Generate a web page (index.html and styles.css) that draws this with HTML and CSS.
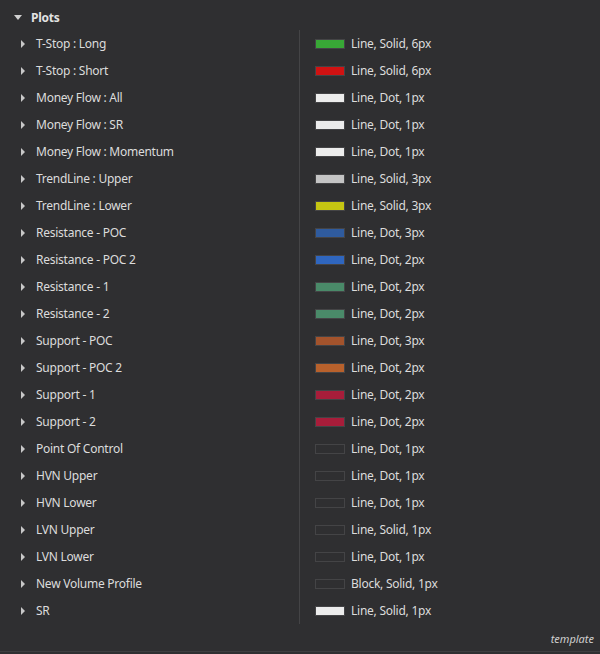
FILE: index.html
```html
<!DOCTYPE html>
<html>
<head>
<meta charset="utf-8">
<link rel="stylesheet" href="styles.css">
</head>
<body>
<div class="panel">
  <div class="header"><span class="tri-down"></span><span class="title">Plots</span></div>
  <div class="list">
    <div class="names">
      <div class="row"><span class="tri-right"></span>T-Stop : Long</div>
      <div class="row"><span class="tri-right"></span>T-Stop : Short</div>
      <div class="row"><span class="tri-right"></span>Money Flow : All</div>
      <div class="row"><span class="tri-right"></span>Money Flow : SR</div>
      <div class="row"><span class="tri-right"></span>Money Flow : Momentum</div>
      <div class="row"><span class="tri-right"></span>TrendLine : Upper</div>
      <div class="row"><span class="tri-right"></span>TrendLine : Lower</div>
      <div class="row"><span class="tri-right"></span>Resistance - POC</div>
      <div class="row"><span class="tri-right"></span>Resistance - POC 2</div>
      <div class="row"><span class="tri-right"></span>Resistance - 1</div>
      <div class="row"><span class="tri-right"></span>Resistance - 2</div>
      <div class="row"><span class="tri-right"></span>Support - POC</div>
      <div class="row"><span class="tri-right"></span>Support - POC 2</div>
      <div class="row"><span class="tri-right"></span>Support - 1</div>
      <div class="row"><span class="tri-right"></span>Support - 2</div>
      <div class="row"><span class="tri-right"></span>Point Of Control</div>
      <div class="row"><span class="tri-right"></span>HVN Upper</div>
      <div class="row"><span class="tri-right"></span>HVN Lower</div>
      <div class="row"><span class="tri-right"></span>LVN Upper</div>
      <div class="row"><span class="tri-right"></span>LVN Lower</div>
      <div class="row"><span class="tri-right"></span>New Volume Profile</div>
      <div class="row"><span class="tri-right"></span>SR</div>
    </div>
    <div class="values">
      <div class="row"><span class="sw green"></span>Line, Solid, 6px</div>
      <div class="row"><span class="sw red"></span>Line, Solid, 6px</div>
      <div class="row"><span class="sw white"></span>Line, Dot, 1px</div>
      <div class="row"><span class="sw white"></span>Line, Dot, 1px</div>
      <div class="row"><span class="sw white"></span>Line, Dot, 1px</div>
      <div class="row"><span class="sw grey"></span>Line, Solid, 3px</div>
      <div class="row"><span class="sw yellow"></span>Line, Solid, 3px</div>
      <div class="row"><span class="sw blue1"></span>Line, Dot, 3px</div>
      <div class="row"><span class="sw blue2"></span>Line, Dot, 2px</div>
      <div class="row"><span class="sw teal"></span>Line, Dot, 2px</div>
      <div class="row"><span class="sw teal"></span>Line, Dot, 2px</div>
      <div class="row"><span class="sw orange1"></span>Line, Dot, 3px</div>
      <div class="row"><span class="sw orange2"></span>Line, Dot, 2px</div>
      <div class="row"><span class="sw crimson"></span>Line, Dot, 2px</div>
      <div class="row"><span class="sw crimson"></span>Line, Dot, 2px</div>
      <div class="row"><span class="sw empty"></span>Line, Dot, 1px</div>
      <div class="row"><span class="sw empty"></span>Line, Dot, 1px</div>
      <div class="row"><span class="sw empty"></span>Line, Dot, 1px</div>
      <div class="row"><span class="sw empty"></span>Line, Solid, 1px</div>
      <div class="row"><span class="sw empty"></span>Line, Dot, 1px</div>
      <div class="row"><span class="sw empty"></span>Block, Solid, 1px</div>
      <div class="row"><span class="sw white"></span>Line, Solid, 1px</div>
    </div>
  </div>
  <div class="footer"><span class="template">template</span></div>
</div>
</body>
</html>
```

FILE: styles.css
```css
html, body {
  margin: 0;
  padding: 0;
  background: #2f2f31;
}
body {
  width: 600px;
  height: 654px;
  overflow: hidden;
  font-family: "Noto Sans", "Open Sans", sans-serif;
  font-size: 12px;
  letter-spacing: -0.25px;
  color: #dcdcdc;
}
.panel {
  display: flex;
  flex-direction: column;
  height: 654px;
}
.header {
  height: 23px;
  padding-top: 6px;
  display: flex;
  align-items: center;
}
.tri-down {
  width: 0;
  height: 0;
  margin-left: 14px;
  margin-right: 9px;
  border-left: 4px solid transparent;
  border-right: 4px solid transparent;
  border-top: 5px solid #d0d0d0;
}
.title {
  font-weight: bold;
  color: #e2e2e2;
}
.list {
  display: flex;
  margin-top: 1px;
}
.names {
  width: 299px;
  border-right: 1px solid #444446;
}
.values {
  flex: 1;
}
.row {
  height: 27px;
  display: flex;
  align-items: center;
  white-space: nowrap;
}
.tri-right {
  width: 0;
  height: 0;
  margin-left: 21px;
  margin-right: 11px;
  border-top: 4px solid transparent;
  border-bottom: 4px solid transparent;
  border-left: 4px solid #c8c8c8;
}
.sw {
  box-sizing: border-box;
  width: 30px;
  height: 10px;
  margin-left: 15px;
  margin-right: 6px;
  border: 1px solid #444446;
}
.green { background: #38a836; }
.red { background: #d01212; }
.white { background: #ececec; }
.grey { background: #c4c4c4; }
.yellow { background: #c5c512; }
.blue1 { background: #2f5b9e; }
.blue2 { background: #2f66bf; }
.teal { background: #4a8a69; }
.orange1 { background: #a3532c; }
.orange2 { background: #b8612c; }
.crimson { background: #a81d3a; }
.empty { background: transparent; }
.footer {
  flex: 1;
  display: flex;
  justify-content: flex-end;
  align-items: flex-start;
  border-bottom: 1px solid #3e3e40;
  margin-bottom: 2px;
}
.template {
  font-style: italic;
  font-size: 11px;
  letter-spacing: 0;
  color: #cfcfcf;
  margin-top: 7px;
  margin-right: 6px;
}
```
